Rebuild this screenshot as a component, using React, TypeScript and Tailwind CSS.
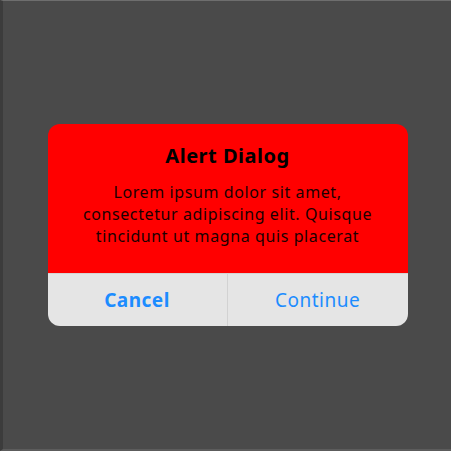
export default function App() {
  return (
    <div className="w-[451px] h-[451px] bg-[#4a4a4a] border-t border-t-[#6e6e6e] border-b-2 border-b-[#5c5c5c] border-l-[3px] border-l-[#3c3c3c] flex items-center justify-center font-['Noto_Sans',sans-serif]">
      <div className="w-[360px] rounded-[12px] overflow-hidden ml-[1px]">
        <div className="bg-[#ff0000] flex flex-col items-center pt-[19px] pb-[26px] px-2 text-center">
          <h2 className="text-[20px] font-bold text-black leading-[26px] tracking-[0.5px]">Alert Dialog</h2>
          <p className="mt-[12px] text-[16px] leading-[22px] text-[#1a0000] tracking-[0.6px]">
            Lorem ipsum dolor sit amet,
            <br />
            consectetur adipiscing elit. Quisque
            <br />
            tincidunt ut magna quis placerat
          </p>
        </div>
        <div className="bg-[#e5e5e5] grid grid-cols-2 h-[53px] border-t border-t-[#d4d4d4]">
          <button className="text-[19px] font-bold text-[#1c8cff] tracking-[0.5px] border-r border-r-[#d2d2d2]">Cancel</button>
          <button className="text-[19px] text-[#1c8cff] tracking-[0.5px]">Continue</button>
        </div>
      </div>
    </div>
  );
}
